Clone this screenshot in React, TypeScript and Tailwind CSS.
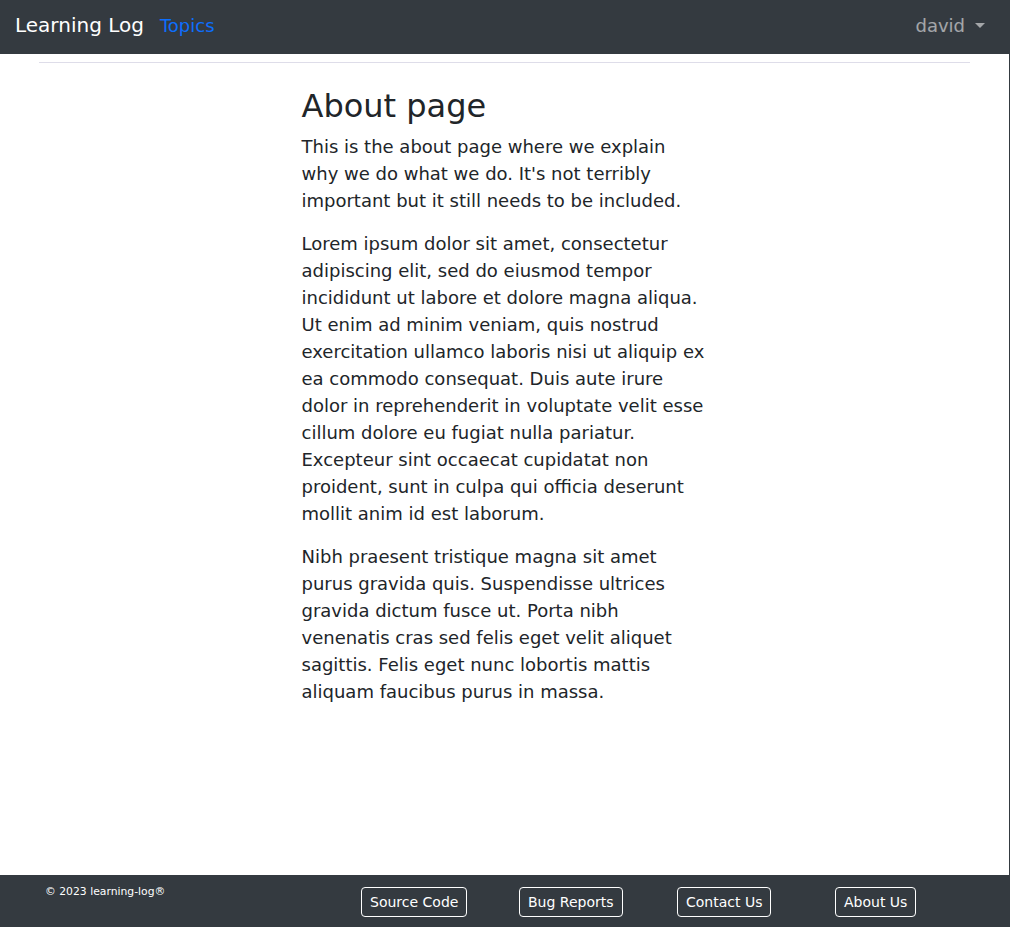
const footerLinks = ["Source Code", "Bug Reports", "Contact Us", "About Us"];

function Navbar() {
  return (
    <nav className="flex h-[54px] items-center justify-between bg-[#343a40] pb-[4px] pl-[15px] pr-[25px]">
      <div className="flex items-center">
        <span className="text-[20px] text-white">Learning Log</span>
        <span className="ml-[16px] text-[18px] text-[#0d6efd]">Topics</span>
      </div>
      <div className="flex items-center text-[18px] text-white/55">
        david
        <span className="ml-[10px] h-0 w-0 border-x-[5px] border-t-[5px] border-x-transparent border-t-white/55" />
      </div>
    </nav>
  );
}

function Footer() {
  return (
    <footer className="flex h-[52px] bg-[#343a40]">
      <div className="w-[361px] pl-[45px] pt-[9px] text-[10.8px] text-white">
        © 2023 learning-log®
      </div>
      <div className="grid grid-cols-[158px_158px_158px_158px] pt-[12px]">
        {footerLinks.map((link) => (
          <div key={link}>
            <button className="h-[30px] rounded-[4px] border border-white px-[8px] text-[14px] text-white">
              {link}
            </button>
          </div>
        ))}
      </div>
    </footer>
  );
}

export default function App() {
  return (
    <div className="flex h-[927px] flex-col bg-white font-['DejaVu_Sans',sans-serif] text-[#212529]">
      <Navbar />
      <main className="flex-1 border-r border-[#343a40]">
        <div className="mx-[39px] mt-[8px] h-px bg-[#dedde9]" />
        <div className="mx-auto mt-[24px] w-[406px] text-[18px] leading-[27px]">
          <h1 className="mb-[8px] text-[32px] leading-[38px]">About page</h1>
          <p className="mb-[16px]">
            This is the about page where we explain why we do what we do. It's not terribly
            important but it still needs to be included.
          </p>
          <p className="mb-[16px]">
            Lorem ipsum dolor sit amet, consectetur adipiscing elit, sed do eiusmod tempor
            incididunt ut labore et dolore magna aliqua. Ut enim ad minim veniam, quis nostrud
            exercitation ullamco laboris nisi ut aliquip ex ea commodo consequat. Duis aute irure
            dolor in reprehenderit in voluptate velit esse cillum dolore eu fugiat nulla pariatur.
            Excepteur sint occaecat cupidatat non proident, sunt in culpa qui officia deserunt
            mollit anim id est laborum.
          </p>
          <p>
            Nibh praesent tristique magna sit amet purus gravida quis. Suspendisse ultrices
            gravida dictum fusce ut. Porta nibh venenatis cras sed felis eget velit aliquet
            sagittis. Felis eget nunc lobortis mattis aliquam faucibus purus in massa.
          </p>
        </div>
      </main>
      <Footer />
    </div>
  );
}
